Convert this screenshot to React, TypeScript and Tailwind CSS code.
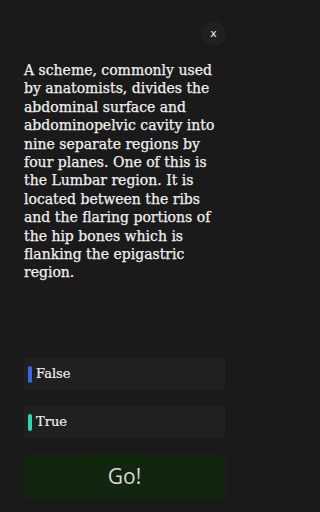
import React, { useState } from 'react';

const question =
  'A scheme, commonly used by anatomists, divides the abdominal surface and abdominopelvic cavity into nine separate regions by four planes. One of this is the Lumbar region. It is located between the ribs and the flaring portions of the hip bones which is flanking the epigastric region.';

const options = [
  { label: 'False', color: 'bg-[#3569e0]' },
  { label: 'True', color: 'bg-[#2fd6ae]' },
];

const App: React.FC = () => {
  const [selected, setSelected] = useState<string | null>(null);

  return (
    <div className="w-full min-h-screen bg-[#1a1a1a]">
      <div className="w-[249px] h-[512px] flex flex-col px-6">
        <div className="flex justify-end pt-[21px]">
          <button className="w-[25px] h-[25px] rounded-full bg-[#202020] text-[#eee] text-[11px] leading-none flex items-center justify-center mr-[-1px] font-['DejaVu_Sans',sans-serif]">
            x
          </button>
        </div>
        <p className="mt-[15px] text-[14px] leading-[18.4px] text-[#f0f0f0] font-['DejaVu_Serif',serif] [-webkit-text-stroke:0.25px_#f0f0f0]">
          {question}
        </p>
        <div className="flex-1" />
        <div className="flex flex-col gap-4">
          {options.map((o) => (
            <button
              key={o.label}
              onClick={() => setSelected(o.label)}
              className={`h-[32px] rounded-[3px] bg-[#202020] flex items-center pl-1 gap-1 text-[13px] text-[#f0f0f0] font-['DejaVu_Serif',serif] [-webkit-text-stroke:0.2px_#f0f0f0] ${
                selected === o.label ? 'ring-1 ring-white/30' : ''
              }`}
            >
              <span className={`w-1 h-[17px] rounded-sm ${o.color}`} />
              {o.label}
            </button>
          ))}
        </div>
        <button className="mt-4 mb-[13px] h-[45px] rounded-[3px] bg-[#12250f] text-[#d9d9d9] text-[21px] font-['Open_Sans',sans-serif]">
          Go!
        </button>
      </div>
    </div>
  );
};

export default App;
